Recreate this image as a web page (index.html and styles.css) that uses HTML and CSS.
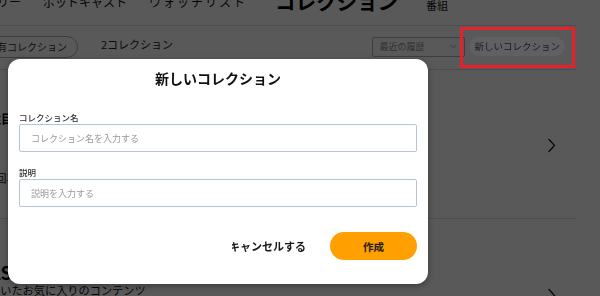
FILE: index.html
```html
<!DOCTYPE html>
<html lang="ja">
<head>
<meta charset="utf-8">
<title>コレクション</title>
<link rel="stylesheet" href="styles.css">
</head>
<body>
<div class="page">
  <nav class="nav">
    <span class="nav-item">ライブラリー</span>
    <span class="nav-item">ポッドキャスト</span>
    <span class="nav-item nav-wide">ウォッチリスト</span>
    <span class="nav-item nav-active">コレクション</span>
    <span class="nav-item nav-small">番組</span>
  </nav>
  <div class="toolbar">
    <button class="pill">所有コレクション</button>
    <span class="count">2コレクション</span>
    <div class="select">
      <span>最近の履歴</span>
      <svg class="select-chev" width="7" height="5" viewBox="0 0 7 5"><polyline points="0.5,0.8 3.5,3.8 6.5,0.8" fill="none" stroke="#999" stroke-width="0.9"/></svg>
    </div>
    <button class="new-btn">新しいコレクション<span class="highlight"></span></button>
  </div>
  <ul class="list">
    <li class="item item-first">
      <div class="item-text">
        <div class="item-title">注目のエピソード</div>
        <div class="item-sub item-sub-first">1回再生</div>
      </div>
      <svg class="chev chev-first" width="9" height="15" viewBox="0 0 9 15"><polyline points="1.5,1 7.5,7.5 1.5,14" fill="none" stroke="#1a1a1a" stroke-width="1.3"/></svg>
    </li>
    <li class="item item-second">
      <div class="item-text">
        <div class="item-title item-title-big">ASMRコレクション</div>
        <div class="item-sub">聴いたお気に入りのコンテンツ</div>
        <div class="item-meta">5件のエピソード</div>
      </div>
      <svg class="chev" width="9" height="15" viewBox="0 0 9 15"><polyline points="1.5,1 7.5,7.5 1.5,14" fill="none" stroke="#1a1a1a" stroke-width="1.3"/></svg>
    </li>
  </ul>
</div>
<div class="overlay"></div>
<div class="modal">
  <h2 class="modal-title">新しいコレクション</h2>
  <label class="field-label field-label-first">コレクション名</label>
  <input class="field-input" type="text" placeholder="コレクション名を入力する">
  <label class="field-label">説明</label>
  <input class="field-input" type="text" placeholder="説明を入力する">
  <div class="actions">
    <button class="cancel"><span>キャンセルする</span></button>
    <button class="create">作成</button>
  </div>
</div>
</body>
</html>
```
FILE: styles.css
```css
* { box-sizing: border-box; }
html, body {
  margin: 0;
  padding: 0;
  overflow: hidden;
  background: #ffffff;
  font-family: "Noto Sans CJK JP", "Noto Sans", sans-serif;
  color: #111;
}
.page {
  width: 601px;
  margin-left: -24px;
}
.nav {
  display: flex;
  align-items: flex-end;
  gap: 22px;
  margin-top: -9.5px;
  margin-left: -27px;
  padding-bottom: 14px;
  border-bottom: 1px solid #dcdcdc;
}
.nav-item {
  font-size: 12px;
  line-height: 1;
  color: #111;
  white-space: nowrap;
  margin-bottom: 3px;
}
.nav-wide { letter-spacing: 2px; }
.nav-active {
  font-size: 20.5px;
  font-weight: 700;
  color: #000;
  margin: 0 6px;
}
.nav-small {
  font-size: 11px;
  margin-bottom: 0;
}

.toolbar {
  display: flex;
  align-items: center;
  height: 44px;
  padding: 0 12px 2px 0;
  border-bottom: 1px solid #dcdcdc;
}
.pill {
  height: 22px;
  padding: 0 10px;
  border: 1px solid #ababab;
  border-radius: 11px;
  background: #fff;
  font-family: inherit;
  font-size: 10px;
  color: #333;
  line-height: 1;
}
.count {
  margin-left: 23px;
  margin-bottom: 5px;
  font-size: 11px;
  color: #222;
}
.select {
  margin-left: auto;
  width: 93px;
  height: 20px;
  border: 1px solid #a4b4cc;
  border-radius: 2px;
  display: flex;
  align-items: center;
  justify-content: space-between;
  padding: 0 7px 0 6px;
  font-size: 9px;
  color: #8c8c8c;
}
.select-chev { display: block; }
.new-btn {
  position: relative;
  z-index: 20;
  margin-left: 4px;
  height: 19px;
  padding: 0 5px;
  border: none;
  border-radius: 10px;
  background: #606064;
  font-family: inherit;
  font-size: 9.5px;
  color: #1c1c1c;
  line-height: 1;
  white-space: nowrap;
}
.highlight {
  position: absolute;
  left: -9px;
  top: -10px;
  width: 115px;
  height: 41px;
  border: 3px solid #e8202a;
}

.list {
  list-style: none;
  margin: 0;
  padding: 0;
}
.item {
  display: flex;
  align-items: center;
  justify-content: space-between;
  padding-left: 13px;
  padding-right: 21px;
  border-bottom: 1px solid #dcdcdc;
}
.item-first {
  padding-top: 40px;
  padding-bottom: 32px;
}
.item-second {
  padding-top: 42px;
  padding-bottom: 20px;
}
.item-text { white-space: nowrap; }
.item-title {
  font-size: 12px;
  line-height: 17px;
  font-weight: 700;
  color: #000;
}
.item-title-big {
  font-size: 18px;
  line-height: 22px;
}
.item-sub {
  font-size: 11.2px;
  line-height: 15px;
  color: #111;
}
.item-sub-first { margin-top: 44px; }
.item-meta {
  margin-top: 16px;
  font-size: 11px;
  line-height: 15px;
  color: #444;
}
.chev { display: block; }
.chev-first { margin-bottom: 6px; }

.overlay {
  position: fixed;
  inset: 0;
  background: rgba(0, 0, 0, 0.65);
  z-index: 10;
}
.modal {
  position: fixed;
  left: 8px;
  top: 59px;
  width: 420px;
  z-index: 11;
  background: #fff;
  border-radius: 12px;
  box-shadow: 0 2px 6px rgba(0, 0, 0, 0.35);
  padding: 9px 11px 24px;
  display: flex;
  flex-direction: column;
}
.modal-title {
  margin: 0;
  text-align: center;
  font-size: 14px;
  line-height: 20px;
  font-weight: 700;
  color: #111;
}
.field-label {
  display: block;
  margin-top: 14px;
  margin-bottom: 1px;
  font-size: 8.5px;
  line-height: 12px;
  font-weight: 500;
  color: #333;
}
.field-label-first { margin-top: 23px; }
.field-input {
  display: block;
  width: 100%;
  height: 28px;
  margin: 0;
  padding: 0 11px;
  border: 1px solid #b7c4d6;
  border-radius: 2px;
  font-family: "Noto Sans CJK JP", "Noto Sans", sans-serif;
  font-size: 9px;
  color: #333;
  outline: none;
}
.field-input::placeholder { color: #9a9a9a; }
.actions {
  display: flex;
  justify-content: flex-end;
  align-items: center;
  gap: 24px;
  margin-top: 25px;
}
.cancel {
  width: 74px;
  height: 28px;
  padding: 0;
  border: none;
  background: none;
  overflow: hidden;
  display: flex;
  align-items: center;
  justify-content: flex-end;
  white-space: nowrap;
  font-family: inherit;
  font-size: 11px;
  font-weight: 700;
  color: #1a1a1a;
}
.create {
  width: 87px;
  height: 28px;
  border: none;
  border-radius: 14px;
  background: #ff9f00;
  font-family: inherit;
  font-size: 10.5px;
  font-weight: 700;
  color: #1e1e1e;
}
```
